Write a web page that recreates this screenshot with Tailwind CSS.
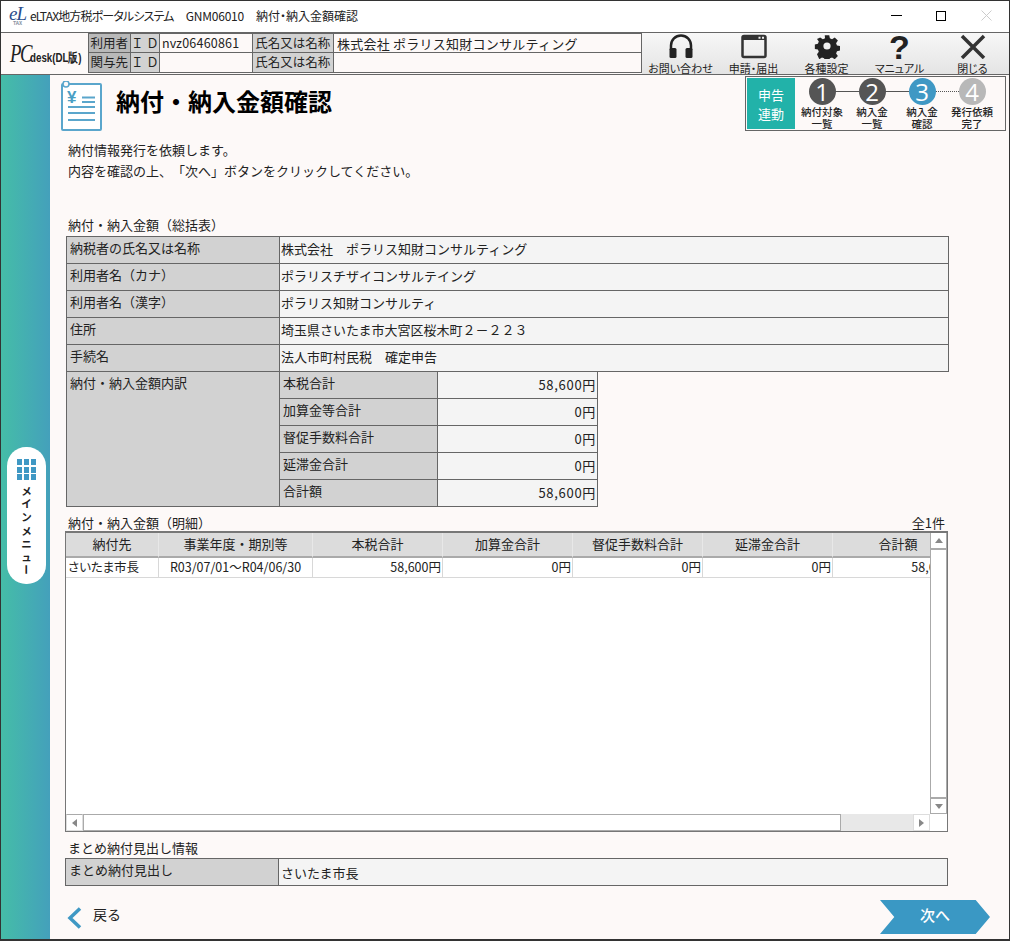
<!DOCTYPE html>
<html lang="ja">
<head>
  <meta charset="UTF-8">
  <title>納付・納入金額確認</title>
  <script src="https://cdn.jsdelivr.net/npm/@tailwindcss/browser@4"></script>
</head>
<body class="bg-[#fdf9f8] text-[#222] font-['Noto_Sans_CJK_JP','Noto_Sans',sans-serif] [text-spacing-trim:space-all]">
  <div class="w-[1010px] h-[941px] flex flex-col overflow-hidden border border-[#333] border-b-2 text-[13px] leading-none">

    <!-- タイトルバー -->
    <div class="h-[31px] shrink-0 bg-white flex items-center pb-[2px]">
      <div class="w-[17px] ml-[8px] flex flex-col items-center">
        <span class="font-['Liberation_Serif',serif] italic text-[19px] leading-[13px] tracking-[-1px] text-[#2b4c8c]">eL</span>
        <span class="text-[5px] leading-[5px] font-bold text-[#8a93a3]">TAX</span>
      </div>
      <div class="ml-[4px] flex text-[12px] whitespace-pre [font-feature-settings:'palt']">
        <span class="tracking-[-.85px]">eLTAX地方税ポータルシステム</span>
        <span class="ml-[12px] tracking-[-.2px]">GNM06010</span>
        <span class="ml-[12px]">納付・納入金額確認</span>
      </div>
      <div class="ml-auto flex items-center">
        <span class="w-[11px] h-px bg-black mr-[34px]"></span>
        <span class="w-[10px] h-[10px] border border-black mr-[35px]"></span>
        <svg class="w-[11px] h-[11px] mr-[17px]" viewBox="0 0 11 11"><path d="M0.5 0.5 10.5 10.5M10.5 0.5 0.5 10.5" stroke="#ccc" fill="none"/></svg>
      </div>
    </div>

    <!-- ツールバー -->
    <div class="h-[43px] shrink-0 border-y border-[#666] flex bg-linear-to-b from-[#f7f7f7] to-[#e4e4e4]">
      <div class="w-[87px] h-full bg-[#fdf9f8] flex items-center pl-[9px] overflow-hidden">
        <span class="w-[20px] shrink-0 font-['Liberation_Serif',serif] italic text-[26px] tracking-[-2px] origin-left scale-x-[.72]">PC</span>
        <span class="shrink-0 font-['Liberation_Sans',sans-serif] font-bold text-[13px] origin-left scale-x-75 whitespace-nowrap mt-[7px]">desk(DL版)</span>
      </div>
      <div class="w-[555px] h-full bg-[#fdf9f8]">
        <div class="h-[40px] grid grid-cols-[42px_29px_93px_81px_1fr] grid-rows-2 border border-[#666] text-[12.500px]">
          <div class="bg-[#b9b9b9] border-r border-b border-[#666] flex items-center justify-center">利用者</div>
          <div class="bg-[#d2d2d2] border-r border-b border-[#666] flex items-center justify-center whitespace-pre">Ｉ Ｄ</div>
          <div class="bg-[#fdf9f8] border-r border-b border-[#666] flex items-center pl-[2px] tracking-[.2px]">nvz06460861</div>
          <div class="bg-[#d2d2d2] border-r border-b border-[#666] flex items-center justify-center">氏名又は名称</div>
          <div class="border-b border-[#666] flex items-center pl-[3px] text-[13px] tracking-[.25px]">株式会社 ポラリス知財コンサルティング</div>
          <div class="bg-[#b9b9b9] border-r border-[#666] flex items-center justify-center">関与先</div>
          <div class="bg-[#d2d2d2] border-r border-[#666] flex items-center justify-center whitespace-pre">Ｉ Ｄ</div>
          <div class="bg-[#fdf9f8] border-r border-[#666]"></div>
          <div class="bg-[#d2d2d2] border-r border-[#666] flex items-center justify-center">氏名又は名称</div>
          <div></div>
        </div>
      </div>
      <div class="flex-1 flex pl-[2px] text-[11px] [font-feature-settings:'palt']">
        <div class="w-[73px] flex flex-col items-center">
          <svg class="w-[24px] h-[25px] mt-[1px]" viewBox="0 0 24 25"><path d="M2 16V11.500a10 10 0 0 1 20 0V16" fill="none" stroke="#222" stroke-width="2.500"/><rect x="0.500" y="14" width="7" height="10" rx="1.500" fill="#222"/><rect x="16.500" y="14" width="7" height="10" rx="1.500" fill="#222"/></svg>
          <span class="mt-[4px] whitespace-nowrap">お問い合わせ</span>
        </div>
        <div class="w-[73px] flex flex-col items-center">
          <svg class="w-[26px] h-[26px]" viewBox="0 0 26 26"><rect x="1.500" y="3" width="23" height="21" rx="1.500" fill="none" stroke="#333" stroke-width="2.500"/><path d="M1.500 3h23v4h-23z" fill="#333"/><path d="M17.500 4.800h2M21 4.800h2" stroke="#eee" stroke-width="2"/></svg>
          <span class="mt-[4px] whitespace-nowrap">申請・届出</span>
        </div>
        <div class="w-[73px] flex flex-col items-center">
          <svg class="w-[26px] h-[26px]" viewBox="0 0 26 26"><path fill="#222" fill-rule="evenodd" d="M10.500 1h5l.7 3.500 2.400 1 3-2 3.500 3.500-2 3 1 2.400 3.400.7v5l-3.400.7-1 2.400 2 3-3.500 3.500-3-2-2.400 1-.7 2.800h-5l-.7-2.800-2.400-1-3 2L1.900 22.300l2-3-1-2.400-3.400-.7v-5l3.400-.7 1-2.400-2-3L5.400 3.500l3 2 2.400-1zM13 9a4 4 0 1 0 0 8 4 4 0 0 0 0-8z" transform="translate(1.300 1.300) scale(.9)"/></svg>
          <span class="mt-[4px] whitespace-nowrap">各種設定</span>
        </div>
        <div class="w-[73px] flex flex-col items-center">
          <span class="h-[26px] font-['Liberation_Sans',sans-serif] font-bold text-[34px] leading-[29px] text-[#222]">?</span>
          <span class="mt-[4px] whitespace-nowrap">マニュアル</span>
        </div>
        <div class="w-[73px] flex flex-col items-center">
          <svg class="w-[26px] h-[26px]" viewBox="0 0 26 26"><path d="M2 3 24 25M24 3 2 25" stroke="#333" stroke-width="3.500" fill="none"/></svg>
          <span class="mt-[4px] whitespace-nowrap">閉じる</span>
        </div>
      </div>
    </div>

    <!-- 本体 -->
    <div class="flex-1 flex min-h-0">
      <aside class="w-[49px] shrink-0 bg-linear-to-r from-[#45bda7] to-[#44a0bb] flex items-center pl-[6px] pt-[17px]">
        <div class="w-[39px] h-[137px] bg-white rounded-[19px] flex flex-col items-center pt-[12px]">
          <div class="grid grid-cols-3 gap-[1.500px] w-[19px]">
            <i class="h-[6px] bg-[#3f98c4]"></i><i class="h-[6px] bg-[#3f98c4]"></i><i class="h-[6px] bg-[#3f98c4]"></i>
            <i class="h-[6px] bg-[#3f98c4]"></i><i class="h-[6px] bg-[#3f98c4]"></i><i class="h-[6px] bg-[#3f98c4]"></i>
            <i class="h-[6px] bg-[#3f98c4]"></i><i class="h-[6px] bg-[#3f98c4]"></i><i class="h-[6px] bg-[#3f98c4]"></i>
          </div>
          <div class="mt-[4px] flex flex-col items-center text-[10.500px] leading-[13.200px] font-bold">
            <span>メ</span><span>イ</span><span>ン</span><span>メ</span><span>ニ</span><span>ュ</span><span class="rotate-90">ー</span>
          </div>
        </div>
      </aside>

      <main class="flex-1 min-w-0 pl-[15px] flex flex-col">
        <!-- 見出しとステップ -->
        <div class="h-[57px] flex">
          <svg class="w-[42px] h-[50px] mt-[6px] -ml-[5px] shrink-0" viewBox="0 0 42 50">
            <rect x="2" y="3" width="39" height="46" rx="1" fill="#fff" stroke="#5aa6cc" stroke-width="2"/>
            <circle cx="6" cy="3" r="3" fill="#fdf9f8" stroke="#5aa6cc" stroke-width="1.500"/>
            <text x="7" y="22" font-size="17" font-weight="700" fill="#4a9fc4" font-family="Liberation Sans">¥</text>
            <path d="M22 16.500h13M22 21h13M8 26h27M8 32h27M8 39h27" stroke="#5aa6cc" stroke-width="2"/>
          </svg>
          <h1 class="ml-[14px] mt-[12px] text-[24px] leading-[28px] font-bold text-black">納付・納入金額確認</h1>
          <div class="ml-auto mr-[3px] mt-px h-[55px] w-[261px] border border-[#666] flex">
            <div class="w-[49px] border-l border-t border-b border-[#fdf9f8] bg-[#22b2a9] text-white text-[13px] leading-[19px] flex flex-col items-center justify-center">
              <span>申告</span><span>連動</span>
            </div>
            <div class="flex-1 flex relative pl-[2px]">
              <div class="absolute left-[38px] top-[14px] w-[36px] border-t border-[#555]"></div>
              <div class="absolute left-[88px] top-[14px] w-[36px] border-t border-[#555]"></div>
              <div class="absolute left-[138px] top-[14px] w-[36px] border-t border-dotted border-[#555]"></div>
              <div class="w-[50px] flex flex-col items-center relative">
                <span class="w-[27px] h-[27px] mt-px rounded-full bg-[#555] text-white text-[24px] font-['Open_Sans',sans-serif] flex items-center justify-center">1</span>
                <span class="mt-px text-center text-[10.500px] leading-[12px] font-medium whitespace-nowrap">納付対象<br>一覧</span>
              </div>
              <div class="w-[50px] flex flex-col items-center relative">
                <span class="w-[27px] h-[27px] mt-px rounded-full bg-[#555] text-white text-[24px] font-['Open_Sans',sans-serif] flex items-center justify-center">2</span>
                <span class="mt-px text-center text-[10.500px] leading-[12px] font-medium whitespace-nowrap">納入金<br>一覧</span>
              </div>
              <div class="w-[50px] flex flex-col items-center relative">
                <span class="w-[27px] h-[27px] mt-px rounded-full bg-[#3f98c4] text-white text-[24px] font-['Open_Sans',sans-serif] flex items-center justify-center">3</span>
                <span class="mt-px text-center text-[10.500px] leading-[12px] font-medium whitespace-nowrap">納入金<br>確認</span>
              </div>
              <div class="w-[50px] flex flex-col items-center relative">
                <span class="w-[27px] h-[27px] mt-px rounded-full bg-[#b8b8b8] text-white text-[24px] font-['Open_Sans',sans-serif] flex items-center justify-center">4</span>
                <span class="mt-px text-center text-[10.500px] leading-[12px] font-medium whitespace-nowrap">発行依頼<br>完了</span>
              </div>
            </div>
          </div>
        </div>

        <div class="pl-[3px] mt-[7px] leading-[21px]">
          <p>納付情報発行を依頼します。</p>
          <p>内容を確認の上、「次へ」ボタンをクリックしてください。</p>
        </div>

        <p class="pl-[3px] mt-[37px] h-[18px]">納付・納入金額（総括表）</p>

        <!-- 総括表 -->
        <div class="w-[883px] ml-px border-t border-l border-[#666] grid grid-cols-[213px_1fr]">
          <div class="h-[27px] pl-[3px] pt-[4px] bg-[#d2d2d2] border-r border-b border-[#666]">納税者の氏名又は名称</div>
          <div class="h-[27px] pl-[1px] pb-[4px] flex items-center bg-[#f4f4f4] border-r border-b border-[#666]">株式会社　ポラリス知財コンサルティング</div>
          <div class="h-[27px] pl-[3px] pt-[4px] bg-[#d2d2d2] border-r border-b border-[#666]">利用者名（カナ）</div>
          <div class="h-[27px] pl-[1px] pb-[4px] flex items-center bg-[#f4f4f4] border-r border-b border-[#666]">ポラリスチザイコンサルテイング</div>
          <div class="h-[27px] pl-[3px] pt-[4px] bg-[#d2d2d2] border-r border-b border-[#666]">利用者名（漢字）</div>
          <div class="h-[27px] pl-[1px] pb-[4px] flex items-center bg-[#f4f4f4] border-r border-b border-[#666]">ポラリス知財コンサルティ</div>
          <div class="h-[27px] pl-[3px] pt-[4px] bg-[#d2d2d2] border-r border-b border-[#666]">住所</div>
          <div class="h-[27px] pl-[1px] pb-[4px] flex items-center bg-[#f4f4f4] border-r border-b border-[#666]">埼玉県さいたま市大宮区桜木町２－２２３</div>
          <div class="h-[27px] pl-[3px] pt-[4px] bg-[#d2d2d2] border-r border-b border-[#666]">手続名</div>
          <div class="h-[27px] pl-[1px] pb-[4px] flex items-center bg-[#f4f4f4] border-r border-b border-[#666]">法人市町村民税　確定申告</div>
          <div class="h-[135px] pl-[3px] pt-[4px] bg-[#d2d2d2] border-r border-b border-[#666]">納付・納入金額内訳</div>
          <div class="h-[135px] -ml-px">
            <div class="w-[319px] grid grid-cols-[159px_1fr] border-r border-[#666]">
              <div class="h-[27px] pl-[3px] pt-[4px] bg-[#d2d2d2] border-l border-r border-b border-[#666]">本税合計</div>
              <div class="h-[27px] pr-px pb-[2px] flex items-center justify-end bg-[#f4f4f4] border-b border-[#666] tracking-[.7px]">58,600円</div>
              <div class="h-[27px] pl-[3px] pt-[4px] bg-[#d2d2d2] border-l border-r border-b border-[#666]">加算金等合計</div>
              <div class="h-[27px] pr-px pb-[2px] flex items-center justify-end bg-[#f4f4f4] border-b border-[#666] tracking-[.7px]">0円</div>
              <div class="h-[27px] pl-[3px] pt-[4px] bg-[#d2d2d2] border-l border-r border-b border-[#666]">督促手数料合計</div>
              <div class="h-[27px] pr-px pb-[2px] flex items-center justify-end bg-[#f4f4f4] border-b border-[#666] tracking-[.7px]">0円</div>
              <div class="h-[27px] pl-[3px] pt-[4px] bg-[#d2d2d2] border-l border-r border-b border-[#666]">延滞金合計</div>
              <div class="h-[27px] pr-px pb-[2px] flex items-center justify-end bg-[#f4f4f4] border-b border-[#666] tracking-[.7px]">0円</div>
              <div class="h-[27px] pl-[3px] pt-[4px] bg-[#d2d2d2] border-l border-r border-b border-[#666]">合計額</div>
              <div class="h-[27px] pr-px pb-[2px] flex items-center justify-end bg-[#f4f4f4] border-b border-[#666] tracking-[.7px]">58,600円</div>
            </div>
          </div>
        </div>

        <div class="w-[880px] pl-[3px] mt-[9px] h-[15px] flex justify-between">
          <span>納付・納入金額（明細）</span><span>全1件</span>
        </div>

        <!-- 明細 -->
        <div class="w-[883px] h-[301px] border border-t-2 border-[#777] bg-white flex flex-col">
          <div class="flex-1 min-h-0 flex">
            <div class="w-[864px] overflow-hidden text-[12.500px]">
              <div class="w-[897px] grid grid-cols-[93px_154px_130px_130px_130px_130px_130px]">
                <div class="h-[25px] pb-[2px] bg-[#dcdcdc] border-r border-b-2 border-r-[#e8e8e8] border-b-[#aaa] flex items-center justify-center text-[13px]">納付先</div>
                <div class="h-[25px] pb-[2px] bg-[#dcdcdc] border-r border-b-2 border-r-[#e8e8e8] border-b-[#aaa] flex items-center justify-center text-[13px]">事業年度・期別等</div>
                <div class="h-[25px] pb-[2px] bg-[#dcdcdc] border-r border-b-2 border-r-[#e8e8e8] border-b-[#aaa] flex items-center justify-center text-[13px]">本税合計</div>
                <div class="h-[25px] pb-[2px] bg-[#dcdcdc] border-r border-b-2 border-r-[#e8e8e8] border-b-[#aaa] flex items-center justify-center text-[13px]">加算金合計</div>
                <div class="h-[25px] pb-[2px] bg-[#dcdcdc] border-r border-b-2 border-r-[#e8e8e8] border-b-[#aaa] flex items-center justify-center text-[13px]">督促手数料合計</div>
                <div class="h-[25px] pb-[2px] bg-[#dcdcdc] border-r border-b-2 border-r-[#e8e8e8] border-b-[#aaa] flex items-center justify-center text-[13px]">延滞金合計</div>
                <div class="h-[25px] pb-[2px] bg-[#dcdcdc] border-b-2 border-b-[#aaa] flex items-center justify-center text-[13px]">合計額</div>
                <div class="h-[20px] pl-[2px] border-r border-b border-[#d8d8d8] flex items-center [font-feature-settings:'palt']">さいたま市長</div>
                <div class="h-[20px] border-r border-b border-[#d8d8d8] flex items-center justify-center">R03/07/01～R04/06/30</div>
                <div class="h-[20px] pr-px border-r border-b border-[#d8d8d8] flex items-center justify-end">58,600円</div>
                <div class="h-[20px] pr-px border-r border-b border-[#d8d8d8] flex items-center justify-end">0円</div>
                <div class="h-[20px] pr-px border-r border-b border-[#d8d8d8] flex items-center justify-end">0円</div>
                <div class="h-[20px] pr-px border-r border-b border-[#d8d8d8] flex items-center justify-end">0円</div>
                <div class="h-[20px] pr-px border-b border-[#d8d8d8] flex items-center justify-end">58,600円</div>
              </div>
            </div>
            <div class="w-[17px] flex flex-col">
              <div class="h-[17px] border border-[#aaa] border-t-0 border-b-2 flex items-center justify-center"><span class="border-x-[4px] border-x-transparent border-b-[5px] border-b-[#888]"></span></div>
              <div class="flex-1 border-x border-[#aaa]"></div>
              <div class="h-[17px] border border-[#aaa] border-t-2 flex items-center justify-center"><span class="border-x-[4px] border-x-transparent border-t-[5px] border-t-[#888]"></span></div>
            </div>
          </div>
          <div class="h-[17px] shrink-0 flex">
            <div class="w-[17px] border border-[#ddd] border-t-[#aaa] flex items-center justify-center"><span class="border-y-[4px] border-y-transparent border-r-[5px] border-r-[#888]"></span></div>
            <div class="w-[758px] border border-[#aaa]"></div>
            <div class="flex-1 bg-[#e8e8e8]"></div>
            <div class="w-[17px] border border-[#ddd] flex items-center justify-center"><span class="border-y-[4px] border-y-transparent border-l-[5px] border-l-[#888]"></span></div>
            <div class="w-[17px]"></div>
          </div>
        </div>

        <p class="pl-[3px] mt-[9px] h-[17px]">まとめ納付見出し情報</p>
        <div class="w-[883px] h-[28px] border border-[#666] grid grid-cols-[213px_1fr] bg-[#f4f4f4]">
          <div class="pl-[3px] pt-[4px] bg-[#d2d2d2] border-r border-[#666]">まとめ納付見出し</div>
          <div class="pl-[2px] flex items-center">さいたま市長</div>
        </div>

        <!-- フッター -->
        <div class="mt-[14px] h-[34px] w-[925px] flex items-center">
          <svg class="w-[15px] h-[22px] ml-[2px] mt-[2px]" viewBox="0 0 15 22"><path d="M13 1.500 3 11l10 9.500" fill="none" stroke="#3f98c4" stroke-width="3.500"/></svg>
          <span class="ml-[11px] text-[14px] pb-[6px]">戻る</span>
          <div class="ml-auto w-[110px] h-[34px] pb-[5px] bg-[#3a98c4] text-white text-[15px] font-medium flex items-center justify-center [clip-path:polygon(0_0,87%_0,100%_50%,87%_100%,0_100%,13%_50%)]">次へ</div>
        </div>
      </main>
    </div>
  </div>
</body>
</html>
